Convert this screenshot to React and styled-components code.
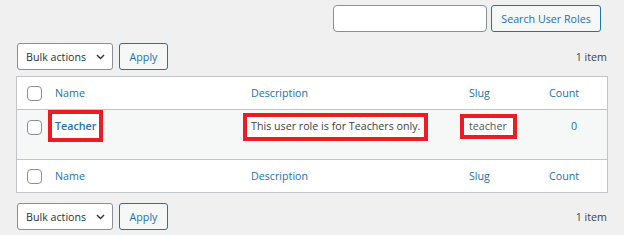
import React from 'react';
import styled, { createGlobalStyle } from 'styled-components';

const GlobalStyle = createGlobalStyle`
  html, body {
    margin: 0;
    background: #f0f0f1;
  }
  body {
    font-family: "Open Sans", "Noto Sans", sans-serif;
    font-size: 10.7px;
    line-height: 16px;
    color: #3c434a;
  }
`;

const Page = styled.div`
  width: 624px;
  box-sizing: border-box;
  padding: 5px 16px 0 16px;
`;

const SearchBox = styled.div`
  display: flex;
  justify-content: flex-end;
  gap: 4px;
  padding-right: 7px;
`;

const SearchInput = styled.input`
  width: 154px;
  height: 27px;
  box-sizing: border-box;
  border: 1px solid #8c8f94;
  border-radius: 4px;
  background: #fff;
  margin: 0;
`;

const Button = styled.button`
  height: 27px;
  box-sizing: border-box;
  width: ${p => p.$width}px;
  padding: 0;
  margin: 0;
  border: 1px solid #2271b1;
  border-radius: 3px;
  background: #f6f7f7;
  color: #2271b1;
  font: inherit;
  cursor: pointer;
`;

const TableNav = styled.div`
  display: flex;
  align-items: center;
  gap: 6px;
  height: 27px;
  margin-top: ${p => p.$top}px;
  padding-left: 1px;
`;

const Select = styled.div`
  width: 96px;
  height: 27px;
  box-sizing: border-box;
  display: flex;
  align-items: center;
  justify-content: space-between;
  padding: 0 7px 0 8px;
  border: 1px solid #8c8f94;
  border-radius: 3px;
  background: #fff;
  color: #2c3338;
`;

const Count = styled.span`
  margin-left: auto;
  padding-right: 1px;
  color: #3c434a;
`;

const Table = styled.div`
  margin-top: 6px;
  border: 1px solid #c3c4c7;
  background: #fff;
`;

const Row = styled.div`
  display: grid;
  grid-template-columns: 30px 196px 218px 80px 1fr;
  height: ${p => (p.$variant === 'body' ? 49 : 32)}px;
  align-items: ${p => (p.$variant === 'body' ? 'start' : 'center')};
  background: ${p => (p.$variant === 'body' ? '#f6f7f7' : '#fff')};
  border-bottom: ${p => (p.$variant === 'head' ? '1px solid #c3c4c7' : 'none')};
  border-top: ${p => (p.$variant === 'foot' ? '1px solid #c3c4c7' : 'none')};
`;

const CheckCell = styled.div`
  padding-left: 10px;
  padding-top: ${p => (p.$body ? 10 : 0)}px;
  display: flex;
`;

const Checkbox = styled.span`
  width: 15px;
  height: 15px;
  box-sizing: border-box;
  border: 1px solid #8c8f94;
  border-radius: 4px;
  background: #fff;
`;

const Cell = styled.div`
  padding: ${p => (p.$body ? '8px' : '0')} 8px 0 ${p => p.$indent || 8}px;
  color: ${p => p.$color || '#3c434a'};
  font-weight: ${p => (p.$bold ? 600 : 400)};
  white-space: nowrap;
`;

const HeadLink = styled.span`
  color: #2271b1;
`;

const Highlight = styled.span`
  display: inline-block;
  border: 4px solid #ec1c24;
  padding: ${p => p.$pad};
  margin: ${p => p.$margin};
  background: #fff;
`;

const Chevron = () => (
  <svg width="9" height="6" viewBox="0 0 9 6" fill="none">
    <path d="M1 1l3.5 3.5L8 1" stroke="#2c3338" strokeWidth="1.4" />
  </svg>
);

const Nav = ({ top }) => (
  <TableNav $top={top}>
    <Select>
      <span>Bulk actions</span>
      <Chevron />
    </Select>
    <Button $width={49}>Apply</Button>
    <Count>1 item</Count>
  </TableNav>
);

const HeaderRow = ({ variant }) => (
  <Row $variant={variant}>
    <CheckCell>
      <Checkbox />
    </CheckCell>
    <Cell><HeadLink>Name</HeadLink></Cell>
    <Cell><HeadLink>Description</HeadLink></Cell>
    <Cell><HeadLink>Slug</HeadLink></Cell>
    <Cell><HeadLink>Count</HeadLink></Cell>
  </Row>
);

export default function App() {
  return (
    <>
      <GlobalStyle />
      <Page>
        <SearchBox>
          <SearchInput type="search" />
          <Button $width={110}>Search User Roles</Button>
        </SearchBox>
        <Nav top={11} />
        <Table>
          <HeaderRow variant="head" />
          <Row $variant="body">
            <CheckCell $body>
              <Checkbox />
            </CheckCell>
            <Cell $body $bold $color="#2271b1">
              <Highlight $pad="4px 3px" $margin="-8px -7px">Teacher</Highlight>
            </Cell>
            <Cell $body>
              <Highlight $pad="1px 4px 3px 4px" $margin="-5px -8px -7px -8px">
                This user role is for Teachers only.
              </Highlight>
            </Cell>
            <Cell $body $color="#50575e">
              <Highlight $pad="0 6px 1px 5px" $margin="-4px -10px -5px -9px">teacher</Highlight>
            </Cell>
            <Cell $body $color="#2271b1" $indent={30}>0</Cell>
          </Row>
          <HeaderRow variant="foot" />
        </Table>
        <Nav top={10} />
      </Page>
    </>
  );
}
